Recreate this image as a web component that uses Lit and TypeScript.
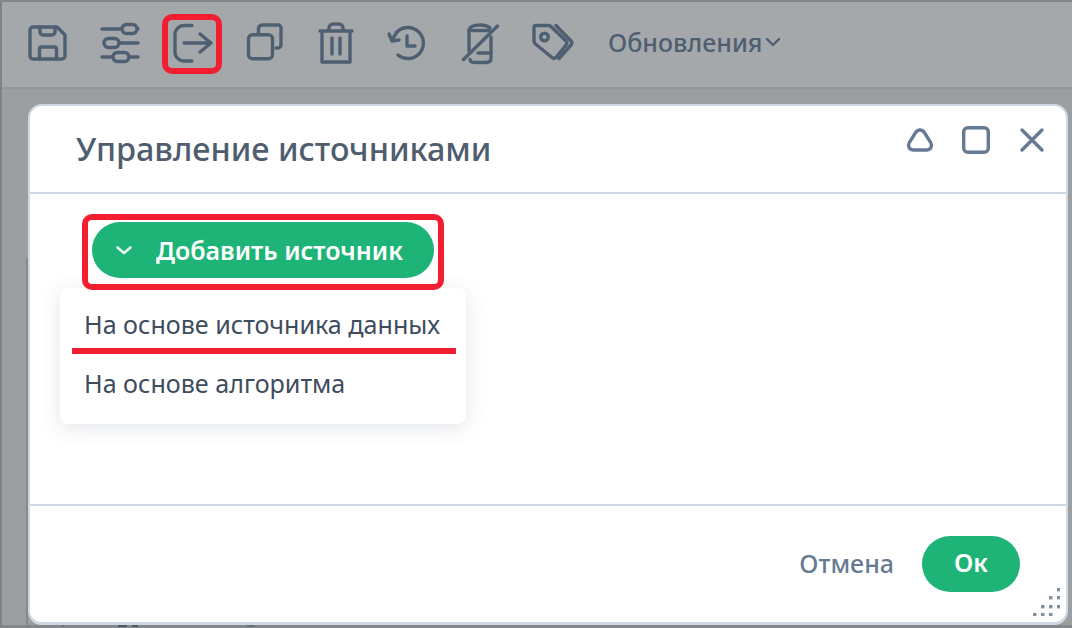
import { LitElement, html, css, svg } from "lit";
import { customElement } from "lit/decorators.js";

function dot(x: number, y: number) {
  return svg`<rect x=${x} y=${y} width="3.4" height="3.4"/>`;
}

@customElement("app-root")
export class AppRoot extends LitElement {
  static styles = css`
    :host { display: block; position: relative; width: 1072px; height: 628px; overflow: hidden; background: #9c9fa1; font-family: "Noto Sans", sans-serif; }
    .frame { position: absolute; inset: 0; border-top: 2px solid #848687; border-left: 2px solid #808283; pointer-events: none; z-index: 3; }
    .page { display: flex; flex-direction: column; height: 100%; box-sizing: border-box; }
    .toolbar { height: 89px; background: #a5a8ab; flex: none; display: flex; align-items: center; padding: 0 0 1px 12px; box-sizing: border-box; border-bottom: 2px solid #92979b; }
    .tool { width: 72px; height: 44px; display: flex; justify-content: center; align-items: center; }
    .tool svg { width: 44px; height: 44px; fill: none; stroke: #4f5f72; stroke-width: 3.4; stroke-linecap: round; stroke-linejoin: round; }
    .updates { display: flex; align-items: center; gap: 2px; margin: 0 0 3px 20px; color: #4f5e70; font-size: 25px; font-weight: 500; line-height: 34px; }
    .updates svg { width: 18px; height: 18px; margin-top: 1px; fill: none; stroke: #4f5e70; stroke-width: 2.4; stroke-linecap: round; stroke-linejoin: round; }
    .body { flex: 1; padding: 15px 4px 3px 28px; display: flex; min-height: 0; }
    .dialog { flex: 1; background: #fff; border-radius: 14px; border: 2px solid #cfd9e5; border-bottom-width: 3px; box-sizing: border-box; display: flex; flex-direction: column; position: relative; }
    .head { flex: none; height: 86px; box-sizing: content-box; display: flex; align-items: flex-start; justify-content: space-between; border-bottom: 2px solid #cfd9e5; padding: 0 18px 0 46px; }
    .title { color: #4f5d6e; font-size: 32.4px; font-weight: 500; line-height: 40px; margin-top: 22px; }
    .ctrls { display: flex; gap: 24px; margin-top: 18px; }
    .ctrls svg { width: 32px; height: 32px; fill: none; stroke: #667b93; stroke-width: 3.4; stroke-linecap: round; stroke-linejoin: round; }
    .content { flex: 1; padding: 28px 0 0 62px; }
    .add { display: inline-flex; align-items: center; width: 342px; height: 56px; box-sizing: border-box; padding: 0 0 0 22px; border: 0; border-radius: 28px; background: #1eb478; color: #fff; font-family: inherit; font-size: 25px; font-weight: 600; }
    .add svg { width: 20px; height: 20px; margin: 0 22px 0 0; fill: none; stroke: #e7f7f0; stroke-width: 2.6; stroke-linecap: round; stroke-linejoin: round; }
    .foot { flex: none; height: 118px; box-sizing: border-box; border-top: 2px solid #cfd9e5; display: flex; align-items: center; justify-content: flex-end; gap: 28px; padding-right: 46px; }
    .cancel { color: #667b93; font-size: 25px; font-weight: 500; margin-bottom: 3px; }
    .ok { width: 98px; height: 56px; border: 0; padding: 0 0 5px; border-radius: 28px; background: #1eb478; color: #fff; font-family: inherit; font-size: 25px; font-weight: 600; }
    .grip { position: absolute; right: 6px; bottom: 6px; width: 30px; height: 30px; }
    .grip svg { display: block; fill: #7f8ea1; }
    .menu { position: absolute; left: 60px; top: 288px; width: 406px; height: 136px; background: #fff; border-radius: 8px; box-shadow: 0 4px 20px rgba(80,95,115,.16); color: #3f4c5d; font-size: 25.1px; z-index: 1; box-sizing: border-box; padding: 20px 0 0 24px; display: flex; flex-direction: column; gap: 26px; }
    .menu div { line-height: 33px; }
    .mark { position: absolute; border: 6px solid #f31f30; box-sizing: border-box; border-radius: 10px; z-index: 2; }
    .mark.exit { left: 162px; top: 14px; width: 60px; height: 60px; }
    .mark.btn { left: 82px; top: 214px; width: 362px; height: 76px; }
    .under { position: absolute; left: 72px; top: 348px; width: 384px; height: 6px; background: #f31f30; z-index: 2; }
    .edge { position: absolute; left: 26px; top: 258px; bottom: 3px; width: 2px; background: #87898a; }
    .strip { position: absolute; left: 0; right: 0; bottom: 0; height: 3px; background: #848687; z-index: 1; }
    .bit { position: absolute; top: 0; height: 2px; background: #4f5a68; }
    .bit.a { left: 62px; width: 2px; opacity: .5; }
    .bit.b { left: 118px; width: 9px; }
    .bit.c { left: 132px; width: 6px; }
    .bit.d { left: 247px; width: 8px; opacity: .5; }
  `;

  private grip() {
    const dots: [number, number][] = [[27, 2], [19, 10], [27, 10], [11, 19], [19, 19], [27, 19], [3, 27], [11, 27], [19, 27]];
    return html`<svg width="30" height="30" viewBox="0 0 30 30">${dots.map(([x, y]) => dot(x, y))}</svg>`;
  }

  render() {
    return html`
      <div class="page">
        <div class="toolbar">
          <div class="tool"><svg viewBox="0 0 44 44"><path d="M7 6h24l8 8v21a3 3 0 0 1-3 3H7a3 3 0 0 1-3-3V9a3 3 0 0 1 3-3z"/><path d="M14 6v5a3 3 0 0 0 3 3h9a3 3 0 0 0 3-3V6"/><path d="M13.500 38V28a2 2 0 0 1 2-2h13a2 2 0 0 1 2 2v10"/></svg></div>
          <div class="tool"><svg viewBox="0 0 44 44"><path d="M4 8h20M39 8h1M21 22h19M4 36h11M31 36h9"/><rect x="24" y="3.500" width="15" height="9" rx="4.500"/><rect x="6" y="17.500" width="15" height="9" rx="4.500"/><rect x="15" y="31.500" width="16" height="9" rx="4.500"/></svg></div>
          <div class="tool"><svg viewBox="0 0 44 44"><path d="M22 4.500h-8a9 9 0 0 0-9 9v17.500a9 9 0 0 0 9 9h8"/><path d="M14 22h27M30 13l11 9-11 9"/></svg></div>
          <div class="tool"><svg viewBox="0 0 44 44"><rect x="6.500" y="13.700" width="24" height="24" rx="4"/><path d="M16.500 13V7.500a3.500 3.500 0 0 1 3.500-3.500h16a3 3 0 0 1 3 3v17a3 3 0 0 1-3 3h-2"/></svg></div>
          <div class="tool"><svg viewBox="0 0 44 44"><path d="M6 10h32M15 10V7a4 4 0 0 1 4-4h6a4 4 0 0 1 4 4v3M8 10v31h28V10"/><path d="M18 17v16M26 17v16"/></svg></div>
          <div class="tool"><svg viewBox="0 0 44 44"><path d="M11 11A15.500 15.500 0 1 1 12 34"/><path d="M11 11l-5 8"/><path d="M3 13l3 7 7-1"/><path d="M21 15v10h8"/></svg></div>
          <div class="tool"><svg viewBox="0 0 44 44"><path d="M11 30V10c0-4 4-6 11-6 5 0 8 1 10 3"/><path d="M11 9.500h20"/><path d="M33 16v21c0 3-2 4.500-5 4.500H17c-3 0-5-1-5-3"/><path d="M20 32h13"/><path d="M5.500 38.500L39.500 5"/></svg></div>
          <div class="tool"><svg viewBox="0 0 44 44"><path d="M5 4.500h13a4 4 0 0 1 3 1l15 14.500a3 3 0 0 1 0 4L26 36.500a3 3 0 0 1-4 0L5.500 23a4 4 0 0 1-1.500-3V5.500z"/><circle cx="14.500" cy="16" r="3.800"/><path d="M26 4.500l15 15.500a3 3 0 0 1 0 4L29 37.500"/></svg></div>
          <div class="updates">Обновления<svg viewBox="0 0 18 18"><path d="M3 6l6 6 6-6"/></svg></div>
        </div>
        <div class="body">
          <div class="dialog">
            <div class="head">
              <div class="title">Управление источниками</div>
              <div class="ctrls">
                <svg viewBox="0 0 32 32"><path d="M16 6c2.200 0 3.500 1 4.600 2.800l6 9.600c2 3.400.4 7.100-3.600 7.600H9c-4-.5-5.600-4.200-3.600-7.600l6-9.600C12.500 7 13.800 6 16 6z"/></svg>
                <svg viewBox="0 0 32 32"><rect x="3.700" y="3.700" width="24.600" height="24.600" rx="4"/></svg>
                <svg viewBox="0 0 32 32"><path d="M6 6l20 20M26 6L6 26"/></svg>
              </div>
            </div>
            <div class="content">
              <button class="add"><svg viewBox="0 0 20 20"><path d="M3.500 7.500l6.500 5.500 6.500-5.500"/></svg>Добавить источник</button>
            </div>
            <div class="foot">
              <span class="cancel">Отмена</span>
              <button class="ok">Ок</button>
            </div>
            <div class="grip">${this.grip()}</div>
          </div>
        </div>
      </div>
      <div class="edge"></div>
      <div class="strip"><span class="bit a"></span><span class="bit b"></span><span class="bit c"></span><span class="bit d"></span></div>
      <div class="menu"><div>На основе источника данных</div><div>На основе алгоритма</div></div>
      <div class="mark exit"></div>
      <div class="mark btn"></div>
      <div class="under"></div>
      <div class="frame"></div>
    `;
  }
}
